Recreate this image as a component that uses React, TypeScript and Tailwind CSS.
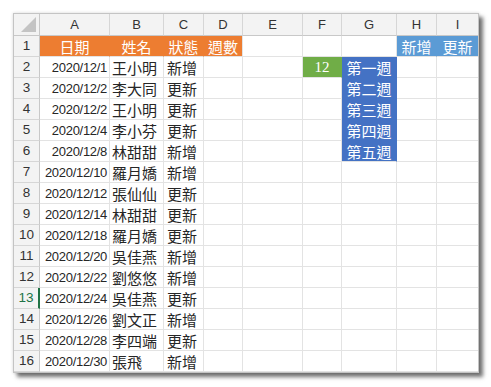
import React from "react";

const cols = ["A", "B", "C", "D", "E", "F", "G", "H", "I"];
const data: [string, string, string][] = [
  ["2020/12/1", "王小明", "新增"],
  ["2020/12/2", "李大同", "更新"],
  ["2020/12/2", "王小明", "更新"],
  ["2020/12/4", "李小芬", "更新"],
  ["2020/12/8", "林甜甜", "新增"],
  ["2020/12/10", "羅月嬌", "新增"],
  ["2020/12/12", "張仙仙", "更新"],
  ["2020/12/14", "林甜甜", "更新"],
  ["2020/12/18", "羅月嬌", "更新"],
  ["2020/12/20", "吳佳燕", "新增"],
  ["2020/12/22", "劉悠悠", "新增"],
  ["2020/12/24", "吳佳燕", "更新"],
  ["2020/12/26", "劉文正", "新增"],
  ["2020/12/28", "李四端", "更新"],
  ["2020/12/30", "張飛", "新增"],
];
const weeks = ["第一週", "第二週", "第三週", "第四週", "第五週"];

const cjk = "font-['Noto_Sans_CJK_TC',sans-serif] text-[15px] leading-none";
const num = "font-['Liberation_Sans',sans-serif] text-[13px] tracking-[-0.3px] leading-none";
const base = "flex items-center border-r border-b overflow-hidden whitespace-nowrap";
const grid = "bg-white border-[#e3e3e3]";

function Cell({ r, c }: { r: number; c: number }) {
  if (r === 1) {
    const headers = ["日期", "姓名", "狀態", "週數"];
    if (c <= 3) {
      return (
        <div className={`${base} justify-center bg-[#ED7D31] border-b-[#e3e3e3] ${c === 3 ? "border-r-[#e3e3e3]" : "border-r-[#ED7D31]"} text-white ${cjk}`}>
          {headers[c]}
        </div>
      );
    }
    if (c === 7 || c === 8) {
      return (
        <div className={`${base} justify-center bg-[#5B9BD5] border-b-[#e3e3e3] ${c === 8 ? "border-r-[#e3e3e3]" : "border-r-[#5B9BD5]"} text-white ${cjk}`}>
          {c === 7 ? "新增" : "更新"}
        </div>
      );
    }
    return <div className={`${base} ${grid}`} />;
  }
  const row = data[r - 2];
  if (c === 0)
    return <div className={`${base} ${grid} justify-end pr-[2px] text-[#262626] ${num}`}>{row[0]}</div>;
  if (c === 1)
    return <div className={`${base} ${grid} justify-start pl-[2px] text-[#262626] ${cjk}`}>{row[1]}</div>;
  if (c === 2)
    return <div className={`${base} ${grid} justify-start pl-[3px] text-[#262626] ${cjk}`}>{row[2]}</div>;
  if (c === 5 && r === 2)
    return (
      <div className={`${base} justify-center bg-[#70AD47] border-[#e3e3e3] border-r-[#70AD47] text-white font-['Liberation_Serif',serif] text-[15px] leading-none`}>
        12
      </div>
    );
  if (c === 6 && r >= 2 && r <= 6)
    return (
      <div className={`${base} justify-center bg-[#4472C4] border-r-[#4472C4] ${r === 6 ? "border-b-[#e3e3e3]" : "border-b-[#4472C4]"} text-white ${cjk}`}>
        {weeks[r - 2]}
      </div>
    );
  return <div className={`${base} ${grid}`} />;
}

export default function App() {
  const rows = Array.from({ length: 16 }, (_, i) => i + 1);
  return (
    <div className="w-[491px] h-[387px] bg-white pt-[13px] pl-[13px]">
      <div className="w-[466px] h-[360px] border border-[#c4c4c4] bg-white overflow-hidden shadow-[4px_4px_4px_rgba(0,0,0,0.55),0_0_3px_rgba(0,0,0,0.15)]">
        <div className="grid grid-cols-[26px_70px_54px_40px_39px_60px_39px_55px_40px_42px] grid-rows-[22px_repeat(16,21px)]">
          <div className="relative bg-[#f3f3f3] border-r border-b border-[#c8c8c8]">
            <svg className="absolute right-[3px] bottom-[3px]" width="15" height="15" viewBox="0 0 15 15">
              <polygon points="15,0 15,15 0,15" fill="#c4c4c4" />
            </svg>
          </div>
          {cols.map((l) => (
            <div
              key={l}
              className="flex items-center justify-center bg-[#f3f3f3] border-r border-b border-r-[#d6d6d6] border-b-[#c8c8c8] text-[#333] font-['Liberation_Sans',sans-serif] text-[13px] leading-none"
            >
              {l}
            </div>
          ))}
          {rows.map((r) => (
            <React.Fragment key={r}>
              <div
                className={`flex items-center justify-center bg-[#f3f3f3] border-b border-b-[#d6d6d6] font-['Liberation_Sans',sans-serif] text-[13.5px] leading-none ${
                  r === 13 ? "text-[#217346] border-r-2 border-r-[#217346]" : "text-[#333] border-r border-r-[#c8c8c8]"
                }`}
              >
                {r}
              </div>
              {cols.map((_, c) => (
                <Cell key={c} r={r} c={c} />
              ))}
            </React.Fragment>
          ))}
        </div>
      </div>
    </div>
  );
}
